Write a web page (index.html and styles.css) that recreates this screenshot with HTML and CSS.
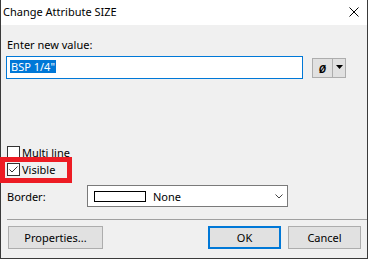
FILE: index.html
```html
<!DOCTYPE html>
<html lang="en">
<head>
  <meta charset="UTF-8" />
  <title>Change Attribute SIZE</title>
  <link rel="stylesheet" href="styles.css">
</head>
<body>
  <div class="dialog">
    <div class="titlebar">
      <span class="title">Change Attribute SIZE</span>
      <svg class="close" width="10" height="10" viewBox="0 0 10 10">
        <path d="M0.5 0.5L9.5 9.5M9.5 0.5L0.5 9.5" stroke="#000" stroke-width="1" fill="none"/>
      </svg>
    </div>

    <div class="content">
      <label class="prompt">Enter new value:</label>
      <div class="value-row">
        <div class="textbox"><span class="sel">BSP 1/4"</span></div>
        <div class="split">
          <span class="sym">Ø</span>
          <span class="drop">
            <svg width="7" height="4" viewBox="0 0 7 4"><path d="M0 0H7L3.5 4Z" fill="#000"/></svg>
          </span>
        </div>
      </div>

      <div class="checks">
        <label class="check"><span class="box"></span>Multi line</label>
        <label class="check visible">
          <span class="box">
            <svg width="11" height="11" viewBox="0 0 11 11"><path d="M1.5 5.5L4 8L9.5 2.5" stroke="#333" stroke-width="1" fill="none"/></svg>
          </span>Visible
        </label>
      </div>

      <div class="border-row">
        <span class="border-label">Border:</span>
        <div class="combo">
          <span class="swatch"></span>
          <span class="combo-text">None</span>
          <svg class="chev" width="8" height="5" viewBox="0 0 8 5"><path d="M0.5 0.5L4 4L7.5 0.5" stroke="#444" stroke-width="1" fill="none"/></svg>
        </div>
      </div>

      <div class="sep"></div>

      <div class="footer">
        <button class="btn props">Properties...</button>
        <button class="btn ok">OK</button>
        <button class="btn cancel">Cancel</button>
      </div>
    </div>
  </div>
</body>
</html>
```

FILE: styles.css
```css
*, *::before, *::after {
  box-sizing: border-box;
}
body {
  margin: 0;
  font-family: "Noto Sans", "Liberation Sans", sans-serif;
  font-size: 11px;
  color: #000;
  background: #fff;
}
.dialog {
  width: 368px;
  height: 259px;
  border: 1px solid #3a3a3a;
  border-top: 0;
  display: flex;
  flex-direction: column;
  background: #f0f0f0;
}
.titlebar {
  height: 25px;
  background: #fff;
  display: flex;
  justify-content: space-between;
  align-items: flex-start;
  padding: 4px 8px 0 2px;
}
.title {
  line-height: 15px;
}
.close {
  margin-top: 3px;
}
.content {
  flex: 1;
  display: flex;
  flex-direction: column;
  padding: 12px 0 0 5px;
}
.prompt {
  line-height: 15px;
  padding-left: 1px;
}
.value-row {
  display: flex;
  align-items: flex-start;
  margin-top: 4px;
  height: 23px;
}
.textbox {
  width: 297px;
  height: 23px;
  border: 1px solid #0078d7;
  background: #fff;
  display: flex;
  align-items: flex-start;
  padding: 3px 0 0 3px;
}
.sel {
  display: inline-block;
  background: #0078d7;
  color: #fff;
  line-height: 13px;
  padding: 0 1px;
}
.split {
  display: flex;
  height: 20px;
  margin: 2px 0 0 9px;
  border: 1px solid #adadad;
  background: #e1e1e1;
}
.sym {
  width: 19px;
  display: flex;
  align-items: center;
  justify-content: center;
  padding-top: 2px;
  font-style: italic;
  font-weight: bold;
  font-size: 10px;
  line-height: 14px;
}
.drop {
  width: 13px;
  border-left: 1px solid #adadad;
  display: flex;
  align-items: center;
  justify-content: center;
  padding-bottom: 3px;
}
.checks {
  margin-top: 65px;
  display: flex;
  flex-direction: column;
}
.check {
  display: flex;
  align-items: center;
  height: 17px;
}
.box {
  width: 13px;
  height: 13px;
  border: 1px solid #333;
  background: #fff;
  margin: 0 2px 0 1px;
  display: flex;
}
.visible {
  position: relative;
}
.visible::after {
  content: "";
  position: absolute;
  left: -6px;
  top: -4px;
  width: 72px;
  height: 26px;
  border: 5px solid #ed1c24;
}
.border-row {
  display: flex;
  align-items: center;
  height: 22px;
  margin-top: 7px;
}
.border-label {
  width: 81px;
  padding-left: 1px;
}
.combo {
  width: 201px;
  height: 22px;
  border: 1px solid #7a7a7a;
  background: #fff;
  display: flex;
  align-items: center;
}
.swatch {
  width: 52px;
  height: 11px;
  border: 1px solid #000;
  background: #fff;
  margin-left: 6px;
}
.combo-text {
  flex: 1;
  margin-left: 7px;
}
.chev {
  margin-right: 4px;
}
.sep {
  height: 1px;
  background: #a0a0a0;
  margin: 12px 0 0 1px;
}
.footer {
  display: flex;
  height: 23px;
  margin-top: 6px;
}
.btn {
  font: inherit;
  color: #000;
  height: 23px;
  padding: 0;
  background: #e1e1e1;
  border: 1px solid #adadad;
}
.props {
  width: 95px;
  margin-left: 2px;
}
.ok {
  width: 73px;
  margin-left: auto;
  border: 2px solid #0078d7;
}
.cancel {
  width: 73px;
  margin: 0 6px 0 7px;
}
```
